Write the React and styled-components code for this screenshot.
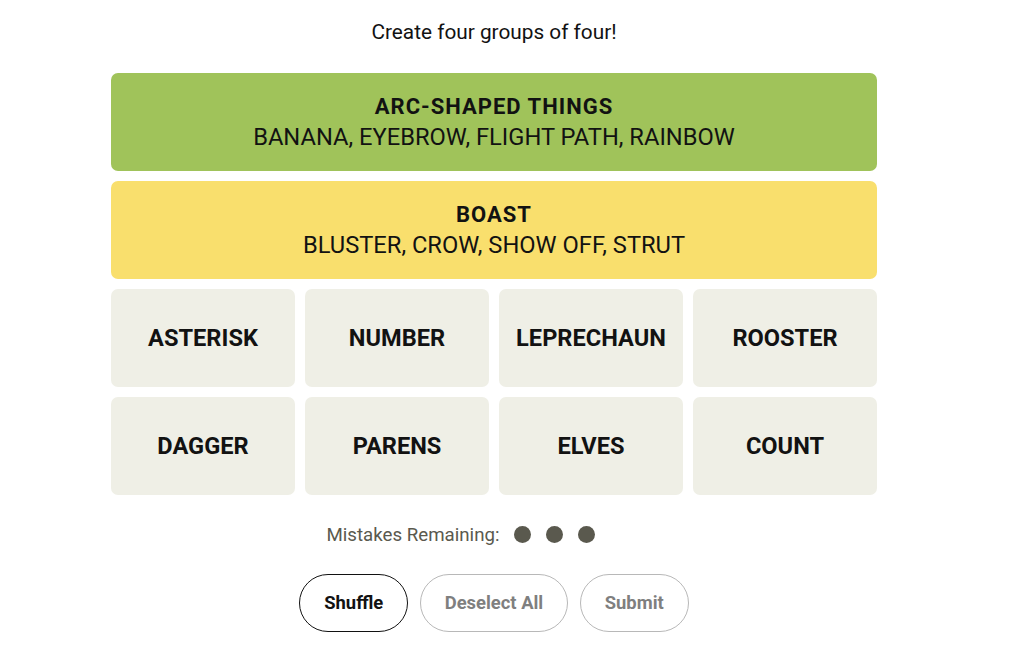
import React from "react";
import styled, { createGlobalStyle } from "styled-components";

const Global = createGlobalStyle`
  html, body { margin: 0; padding: 0; background: #ffffff; }
  body { font-family: Roboto, "Liberation Sans", Arial, sans-serif; color: #121212; }
`;

const Page = styled.div`
  width: 988px;
  display: flex;
  flex-direction: column;
  align-items: center;
`;

const Prompt = styled.p`
  margin: 20px 0 0;
  font-size: 20.8px;
  line-height: 24px;
  font-weight: 400;
  color: #121212;
`;

const Board = styled.div`
  margin-top: 28.5px;
  width: 766px;
  display: flex;
  flex-direction: column;
  gap: 10px;
`;

const SolvedRow = styled.div`
  height: 98px;
  border-radius: 7px;
  background: ${(p) => p.$color};
  display: flex;
  flex-direction: column;
  align-items: center;
  justify-content: center;
  text-transform: uppercase;
  line-height: 30px;
  color: #121212;
`;

const GroupTitle = styled.div`
  font-size: 22px;
  letter-spacing: 1px;
  font-weight: 700;
`;

const GroupMembers = styled.div`
  font-size: 23.7px;
  font-weight: 400;
`;

const TileGrid = styled.div`
  display: grid;
  grid-template-columns: repeat(4, 1fr);
  gap: 10px;
`;

const Tile = styled.div`
  height: 98px;
  border-radius: 7px;
  background: #efefe6;
  display: flex;
  align-items: center;
  justify-content: center;
  font-size: 23.6px;
  font-weight: 700;
  text-transform: uppercase;
  color: #121212;
`;

const Mistakes = styled.div`
  margin-top: 28px;
  height: 24px;
  display: flex;
  align-items: center;
  gap: 14px;
  font-size: 18.7px;
  color: #5a594e;
`;

const Dots = styled.div`
  width: 148px;
  display: flex;
  gap: 14.5px;
`;

const Dot = styled.span`
  width: 17.5px;
  height: 17.5px;
  border-radius: 50%;
  background: #5a594e;
`;

const Controls = styled.div`
  margin-top: 27px;
  display: flex;
  gap: 11.5px;
`;

const Pill = styled.button`
  height: 58px;
  padding: 0 24px;
  border-radius: 29px;
  background: #ffffff;
  border: 1px solid ${(p) => (p.$active ? "#121212" : "#b8b8b8")};
  color: ${(p) => (p.$active ? "#121212" : "#7f7f7f")};
  font-family: Roboto, "Liberation Sans", Arial, sans-serif;
  font-size: 18.4px;
  font-weight: 700;
  cursor: pointer;
`;

const groups = [
  { color: "#a0c35a", title: "Arc-Shaped Things", members: "Banana, Eyebrow, Flight Path, Rainbow" },
  { color: "#f9df6d", title: "Boast", members: "Bluster, Crow, Show Off, Strut" },
];

const words = ["Asterisk", "Number", "Leprechaun", "Rooster", "Dagger", "Parens", "Elves", "Count"];

export default function App() {
  return (
    <>
      <Global />
      <Page>
        <Prompt>Create four groups of four!</Prompt>
        <Board>
          {groups.map((g) => (
            <SolvedRow key={g.title} $color={g.color}>
              <GroupTitle>{g.title}</GroupTitle>
              <GroupMembers>{g.members}</GroupMembers>
            </SolvedRow>
          ))}
          <TileGrid>
            {words.map((w) => (
              <Tile key={w}>{w}</Tile>
            ))}
          </TileGrid>
        </Board>
        <Mistakes>
          Mistakes Remaining:
          <Dots>
            <Dot />
            <Dot />
            <Dot />
          </Dots>
        </Mistakes>
        <Controls>
          <Pill $active>Shuffle</Pill>
          <Pill>Deselect All</Pill>
          <Pill>Submit</Pill>
        </Controls>
      </Page>
    </>
  );
}
